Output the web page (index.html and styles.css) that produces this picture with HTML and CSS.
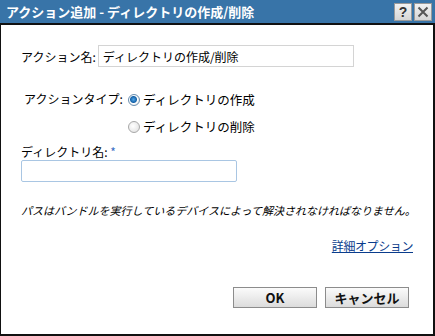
FILE: index.html
```html
<!DOCTYPE html>
<html lang="ja">

<head>
    <meta charset="UTF-8">
    <title>アクション追加 - ディレクトリの作成/削除</title>
    <link rel="stylesheet" href="styles.css">
</head>

<body>
    <div class="dialog">
        <div class="titlebar">
            <span class="title">アクション追加 - ディレクトリの作成/削除</span>
            <div class="title-buttons">
                <span class="tbtn">?</span>
                <span class="tbtn">
                    <svg width="12" height="12" viewBox="0 0 12 12">
                        <path d="M1.5 1.5 L10.5 10.5 M10.5 1.5 L1.5 10.5" stroke="#555" stroke-width="2"/>
                    </svg>
                </span>
            </div>
        </div>

        <div class="content">
            <div class="row name-row">
                <label class="label" for="actionName">アクション名:</label>
                <input id="actionName" class="text-input name-input" type="text" value="ディレクトリの作成/削除">
            </div>

            <div class="type-row">
                <span class="label type-label">アクションタイプ:</span>
                <div class="radios">
                    <label class="radio-line"><span class="radio checked"></span>ディレクトリの作成</label>
                    <label class="radio-line"><span class="radio"></span>ディレクトリの削除</label>
                </div>
            </div>

            <div class="dir-block">
                <label class="label" for="dirName">ディレクトリ名: <span class="req">*</span></label>
                <input id="dirName" class="text-input dir-input" type="text">
            </div>

            <p class="note">パスはバンドルを実行しているデバイスによって解決されなければなりません。</p>

            <div class="link-row">
                <a href="#" class="link">詳細オプション</a>
            </div>

            <div class="buttons">
                <button class="button ok">OK</button>
                <button class="button">キャンセル</button>
            </div>
        </div>
    </div>
</body>

</html>
```

FILE: styles.css
```css
body {
    margin: 0;
    font-family: "Noto Sans CJK JP", "Liberation Sans", sans-serif;
    font-size: 12px;
    color: #000;
    background: #fff;
}

.dialog {
    width: 435px;
    height: 336px;
    box-sizing: border-box;
    display: flex;
    flex-direction: column;
}

.titlebar {
    height: 23px;
    background-color: #3874a8;
    border-bottom: 2px solid #111;
    display: flex;
    align-items: center;
    justify-content: space-between;
    padding: 0 3px 0 6px;
}

.title {
    color: #fff;
    font-weight: bold;
    font-size: 13px;
}

.title-buttons {
    display: flex;
    gap: 2px;
}

.tbtn {
    width: 16px;
    height: 16px;
    background: linear-gradient(#f2f2f2, #d6d6d6);
    border: 1px solid #9a9a9a;
    display: flex;
    align-items: center;
    justify-content: center;
    font-weight: bold;
    font-size: 14px;
    color: #333;
    font-family: "Liberation Sans", sans-serif;
}

.content {
    flex: 1;
    border: 1px solid #111;
    border-width: 0 2px 2px 1px;
    padding: 20px 20px 0 20px;
}

.row {
    display: flex;
    align-items: center;
}

.text-input {
    height: 22px;
    box-sizing: border-box;
    border: 1px solid #d4d4d4;
    font-family: inherit;
    font-size: 12px;
    padding: 0 4px;
    margin: 0;
}

.name-input {
    width: 256px;
    margin-left: 2px;
}

.type-row {
    display: flex;
    margin-top: 23px;
}

.type-label {
    padding-left: 3px;
    width: 104px;
}

.radios {
    display: flex;
    flex-direction: column;
    gap: 8px;
}

.radio-line {
    display: flex;
    align-items: center;
    gap: 3px;
    font-size: 12.5px;
}

.radio {
    width: 10px;
    height: 10px;
    border-radius: 50%;
    border: 1px solid #a8a8a8;
    background: radial-gradient(circle at 40% 40%, #fff, #ddd);
}

.radio.checked {
    border-color: #6a8fb0;
    background: radial-gradient(circle at 45% 45%, #4fa6e8 0, #1763a8 3px, #fff 4px, #e4e4e4 6px);
}

.dir-block {
    display: flex;
    flex-direction: column;
    margin-top: 7px;
}

.req {
    color: #3a6fc4;
}

.dir-input {
    width: 216px;
    margin-top: 0;
    border-color: #a9c6e3;
    border-radius: 2px;
}

.note {
    font-style: italic;
    font-size: 11px;
    white-space: nowrap;
    margin: 20px 0 0 0;
}

.link-row {
    text-align: right;
    margin-top: 19px;
}

.link {
    color: #0a3c8c;
    text-decoration: underline;
    letter-spacing: -0.4px;
}

.buttons {
    display: flex;
    justify-content: flex-end;
    gap: 8px;
    margin-top: 33px;
    padding-right: 4px;
}

.button {
    width: 84px;
    height: 21px;
    border: 1px solid #8c8c8c;
    background: linear-gradient(#fbfbfb, #dcdcdc);
    font-family: inherit;
    font-weight: bold;
    font-size: 13px;
    padding: 0;
    color: #111;
}
```
